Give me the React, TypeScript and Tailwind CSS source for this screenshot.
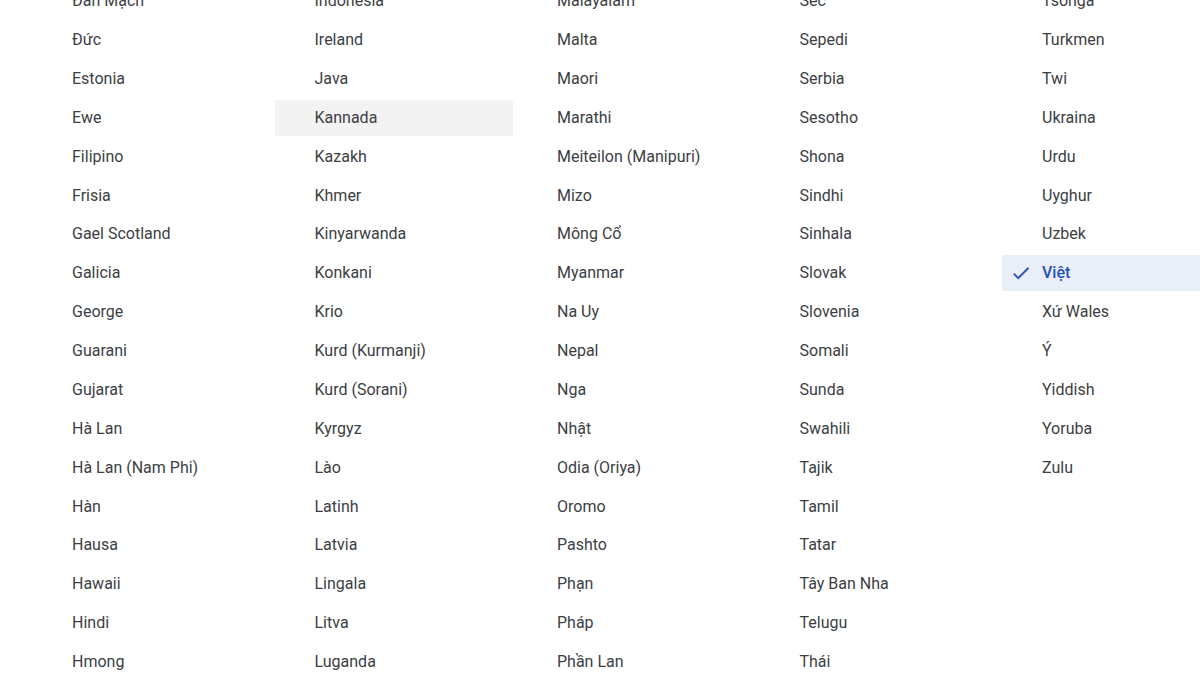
import React from "react";

const COLUMNS: string[][] = [
  ["Đan Mạch", "Đức", "Estonia", "Ewe", "Filipino", "Frisia", "Gael Scotland", "Galicia", "George", "Guarani", "Gujarat", "Hà Lan", "Hà Lan (Nam Phi)", "Hàn", "Hausa", "Hawaii", "Hindi", "Hmong"],
  ["Indonesia", "Ireland", "Java", "Kannada", "Kazakh", "Khmer", "Kinyarwanda", "Konkani", "Krio", "Kurd (Kurmanji)", "Kurd (Sorani)", "Kyrgyz", "Lào", "Latinh", "Latvia", "Lingala", "Litva", "Luganda"],
  ["Malayalam", "Malta", "Maori", "Marathi", "Meiteilon (Manipuri)", "Mizo", "Mông Cổ", "Myanmar", "Na Uy", "Nepal", "Nga", "Nhật", "Odia (Oriya)", "Oromo", "Pashto", "Phạn", "Pháp", "Phần Lan"],
  ["Séc", "Sepedi", "Serbia", "Sesotho", "Shona", "Sindhi", "Sinhala", "Slovak", "Slovenia", "Somali", "Sunda", "Swahili", "Tajik", "Tamil", "Tatar", "Tây Ban Nha", "Telugu", "Thái"],
  ["Tsonga", "Turkmen", "Twi", "Ukraina", "Urdu", "Uyghur", "Uzbek", "Việt", "Xứ Wales", "Ý", "Yiddish", "Yoruba", "Zulu"],
];

const HOVERED = "Kannada";
const SELECTED = "Việt";

function CheckIcon() {
  return (
    <svg viewBox="0 0 24 24" className="absolute left-[8px] top-1/2 -translate-y-1/2 w-[22px] h-[22px]" fill="#2a55b8">
      <path d="M9 16.17L4.83 12l-1.42 1.41L9 19 21 7l-1.41-1.41z" />
    </svg>
  );
}

function LanguageItem({ name }: { name: string }) {
  const selected = name === SELECTED;
  const hovered = name === HOVERED;
  return (
    <div
      className={`relative h-[36px] flex items-center pl-[40px] text-[16px] whitespace-nowrap ${
        selected ? "bg-[#e9eef9] text-[#2150bd] font-medium" : hovered ? "bg-[#f3f3f3] text-[#3c4043]" : "text-[#3c4043]"
      }`}
    >
      {selected && <CheckIcon />}
      {name}
    </div>
  );
}

export default function App() {
  return (
    <div className="w-[1200px] h-[675px] overflow-hidden bg-white" style={{ fontFamily: "Roboto, 'Noto Sans', sans-serif" }}>
      <div className="grid grid-cols-[repeat(5,238px)] gap-x-[4.5px] pl-[32px] -mt-[16.8px]">
        {COLUMNS.map((col, i) => (
          <div key={i} className="flex flex-col gap-[2.875px]">
            {col.map((name) => (
              <LanguageItem key={name} name={name} />
            ))}
          </div>
        ))}
      </div>
    </div>
  );
}
